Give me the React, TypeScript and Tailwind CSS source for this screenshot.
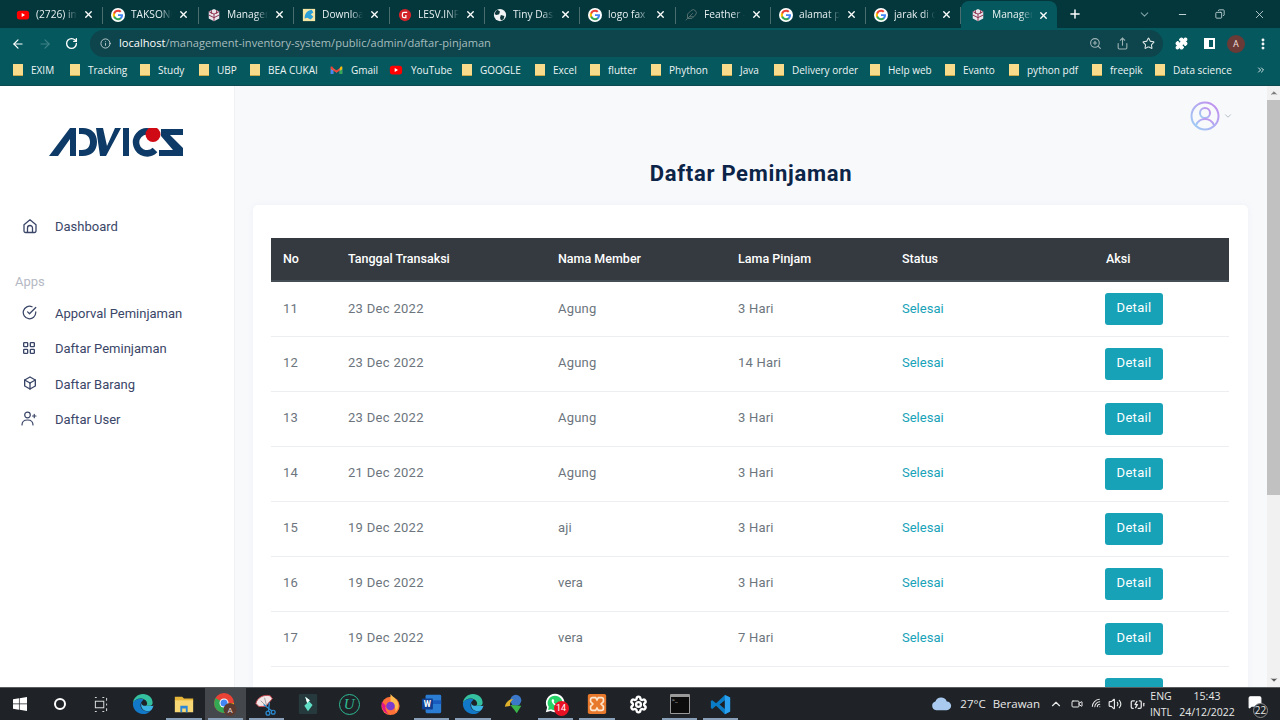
import React from 'react';
import { ArrowLeft, ArrowRight, RotateCw, Info, ZoomIn, Share, Star, Puzzle, X, Plus, ChevronDown, Minus, Copy, ChevronUp, Volume2, Wifi, BatteryCharging, MessageSquare, Settings, EllipsisVertical, Video, ChevronsRight } from 'lucide-react';
import { FiCheckCircle } from 'react-icons/fi';
import { TbLayoutGrid, TbBox } from 'react-icons/tb';

const GoogleIcon = () => (
  <svg viewBox="0 0 24 24" className="w-[14px] h-[14px] shrink-0">
    <circle cx="12" cy="12" r="12" fill="#fff" />
    <path d="M20.6 12.2c0-.6-.1-1.200-.2-1.700H12v3.300h4.800c-.2 1.100-.8 2-1.800 2.700v2.200h2.900c1.700-1.600 2.700-3.800 2.700-6.500z" fill="#4285F4" />
    <path d="M12 21c2.400 0 4.400-.8 5.900-2.200L15 16.500c-.8.500-1.800.9-3 .9-2.300 0-4.300-1.600-5-3.700H4v2.300C5.500 19 8.500 21 12 21z" fill="#34A853" />
    <path d="M7 13.700c-.4-1.100-.4-2.300 0-3.400V8H4c-1.300 2.500-1.300 5.500 0 8l3-2.300z" fill="#FBBC05" />
    <path d="M12 6.600c1.300 0 2.500.5 3.400 1.300L18 5.400C16.400 3.900 14.400 3 12 3 8.500 3 5.500 5 4 8l3 2.300c.7-2.100 2.700-3.700 5-3.700z" fill="#EA4335" />
  </svg>
);

const YoutubeIcon = () => (
  <svg viewBox="0 0 16 16" className="w-[14px] h-[14px] shrink-0">
    <rect x="1" y="3" width="14" height="10" rx="3" fill="#f00" />
    <path d="M6.500 5.800v4.400L10.300 8z" fill="#fff" />
  </svg>
);

const CubeIcon = () => (
  <svg viewBox="0 0 16 16" className="w-[14px] h-[14px] shrink-0">
    <path d="M8 1l6 3v8l-6 3-6-3V4z" fill="#e9e4ea" />
    <path d="M2 4l6 3 6-3M8 7v8M5 2.500v4M11 2.500v4M2 8l6 3 6-3" stroke="#8b2d4c" strokeWidth="1.100" fill="none" />
  </svg>
);

const DownloadIcon = () => (
  <svg viewBox="0 0 16 16" className="w-[14px] h-[14px] shrink-0">
    <rect x="1" y="1" width="14" height="14" fill="#f6e6a6" />
    <path d="M3 12C3 6 6 3 11 2l2 3-3 2 3 3-3 3-4-2z" fill="#2b9fd8" />
  </svg>
);

const LesvIcon = () => (
  <svg viewBox="0 0 16 16" className="w-[14px] h-[14px] shrink-0">
    <circle cx="8" cy="8" r="7" fill="#d3232a" />
    <path d="M10.500 5H7a2 2 0 00-2 2v2a2 2 0 002 2h2V8" stroke="#fff" strokeWidth="1.400" fill="none" />
  </svg>
);

const GlobeIcon = () => (
  <svg viewBox="0 0 16 16" className="w-[14px] h-[14px] shrink-0">
    <circle cx="8" cy="8" r="7" fill="#f1f3f4" />
    <path d="M5 2l3 2-1 3-3 1-2-1c.3-2 1.500-4 3-5zM9 8l4 1-1 4-3 1-1-3z" fill="#10383c" />
  </svg>
);

const FeatherIcon = () => (
  <svg viewBox="0 0 16 16" className="w-[14px] h-[14px] shrink-0" fill="none" stroke="#54706f" strokeWidth="1.100">
    <path d="M13 3a3.500 3.500 0 00-5 0L4 7v5h5l4-4a3.500 3.500 0 000-5zM2 14L10 6M6 10h5" />
  </svg>
);

const FolderIcon = () => (
  <svg viewBox="0 0 10 14" className="w-[10px] h-[14px] shrink-0">
    <path d="M0 1h10v12H2.500L0 13z" fill="#f8dc8b" />
    <path d="M0 13h10v-1H0z" fill="#c9a94b" />
  </svg>
);

const GmailIcon = () => (
  <svg viewBox="0 0 16 12" className="w-[13px] h-[10px] shrink-0">
    <path d="M1 11V2l7 5 7-5v9h-3V6L8 9 4 6v5z" fill="#c9c9c9" />
    <path d="M1 2v3l3 2V3.500L2.500 1.500z" fill="#ea4335" />
    <path d="M15 2v3l-3 2V3.500l1.500-2z" fill="#fbbc05" />
    <path d="M4 3.500L8 6.500l4-3v3L8 9.500l-4-3z" fill="#ea4335" />
    <path d="M1 5v6h3V7z" fill="#4285f4" />
    <path d="M15 5v6h-3V7z" fill="#34a853" />
  </svg>
);

const HomeIcon = () => (
  <svg viewBox="0 0 16 16" className="w-[16px] h-[16px] -mt-[2px]" fill="none" stroke="currentColor" strokeWidth="1.300" strokeLinejoin="round">
    <path d="M2 6.800L8 1.800l6 5V13a1.500 1.500 0 01-1.500 1.500h-9A1.500 1.500 0 012 13z" />
    <path d="M5.500 14.500V10a2.500 2.500 0 015 0v4.500" />
  </svg>
);

const UserAddIcon = () => (
  <svg viewBox="0 0 16 16" className="w-[16px] h-[16px] -ml-[1px]" fill="none" stroke="currentColor" strokeWidth="1.200" strokeLinecap="round">
    <circle cx="6.500" cy="4" r="2.800" />
    <path d="M1 14c0-3.300 2.400-5 5.500-5s5.500 1.700 5.500 5M11.500 5h3.500M13.250 3.250v3.500" />
  </svg>
);

const tabs = [
  { title: '(2726) im', icon: <YoutubeIcon />, cls: 'w-[95px]' },
  { title: 'TAKSONOMI', icon: <GoogleIcon />, cls: 'w-[96px]' },
  { title: 'Managemen', icon: <CubeIcon />, cls: 'w-[95px]' },
  { title: 'Downloads', icon: <DownloadIcon />, cls: 'w-[96px]' },
  { title: 'LESV.INFO', icon: <LesvIcon />, cls: 'w-[95px]' },
  { title: 'Tiny Dashb', icon: <GlobeIcon />, cls: 'w-[95px]' },
  { title: 'logo fax -', icon: <GoogleIcon />, cls: 'w-[96px]' },
  { title: 'Feather -', icon: <FeatherIcon />, cls: 'w-[95px]' },
  { title: 'alamat pt', icon: <GoogleIcon />, cls: 'w-[95px]' },
  { title: 'jarak di c', icon: <GoogleIcon />, cls: 'w-[95px]' },
];

const bookmarks = [
  { label: 'EXIM', cls: 'w-[57px]' },
  { label: 'Tracking', cls: 'w-[70px]' },
  { label: 'Study', cls: 'w-[59px]' },
  { label: 'UBP', cls: 'w-[51px]' },
  { label: 'BEA CUKAI', cls: 'w-[80px]' },
  { label: 'Gmail', cls: 'w-[59px] gap-[7px]', icon: <GmailIcon /> },
  { label: 'YouTube', cls: 'w-[73px] gap-[6px]', icon: <YoutubeIcon /> },
  { label: 'GOOGLE', cls: 'w-[73px]' },
  { label: 'Excel', cls: 'w-[55px]' },
  { label: 'flutter', cls: 'w-[61px]' },
  { label: 'Phython', cls: 'w-[71px]' },
  { label: 'Java', cls: 'w-[52px]' },
  { label: 'Delivery order', cls: 'w-[96px]' },
  { label: 'Help web', cls: 'w-[75px]' },
  { label: 'Evanto', cls: 'w-[64px]' },
  { label: 'python pdf', cls: 'w-[83px]' },
  { label: 'freepik', cls: 'w-[63px]' },
  { label: 'Data science', cls: 'w-[90px]' },
];

const menuApps = [
  { label: 'Apporval Peminjaman', icon: <FiCheckCircle className="w-[15px] h-[15px]" />, cls: 'h-[35px]' },
  { label: 'Daftar Peminjaman', icon: <TbLayoutGrid className="w-[16px] h-[16px] -ml-[1px]" />, cls: 'h-[36px]' },
  { label: 'Daftar Barang', icon: <TbBox className="w-[16px] h-[16px]" />, cls: 'h-[35px]' },
  { label: 'Daftar User', icon: <UserAddIcon />, cls: 'h-[36px]' },
];

const rows = [
  { no: 11, date: '23 Dec 2022', member: 'Agung', lama: '3 Hari' },
  { no: 12, date: '23 Dec 2022', member: 'Agung', lama: '14 Hari' },
  { no: 13, date: '23 Dec 2022', member: 'Agung', lama: '3 Hari' },
  { no: 14, date: '21 Dec 2022', member: 'Agung', lama: '3 Hari' },
  { no: 15, date: '19 Dec 2022', member: 'aji', lama: '3 Hari' },
  { no: 16, date: '19 Dec 2022', member: 'vera', lama: '3 Hari' },
  { no: 17, date: '19 Dec 2022', member: 'vera', lama: '7 Hari' },
  { no: 18, date: '19 Dec 2022', member: 'vera', lama: '3 Hari' },
];

const EdgeIcon = () => (
  <svg viewBox="0 0 24 24" className="w-[22px] h-[22px]">
    <path d="M12 1C6 1 1.500 5.500 1 11c2-4 6-5.500 9.500-5 3.500.5 6 3 6 5.500 0 1.500-1 2.500-2.500 2.500h5c2.500 0 3.500-1.500 3.500-3.500C22.500 5 18 1 12 1z" fill="#35c1a0" />
    <path d="M1 11c-.5 6.500 4.500 12 11 12 3.500 0 6.500-1.500 8.500-4-3 1.500-6.500 1-8.500-.5-3-2-3.500-6-1.500-9 1-1.500 2-2 2.500-2.500C9 5.500 3 6.500 1 11z" fill="#1279c9" />
    <path d="M14 14c-1.500 0-3.500-.5-3.500-3-1 2.500-.5 5 1.500 7 2.500 2 6 2 8.500 1 1.500-1.500 2.500-3.500 3-5.500-1.500 1-3 .5-9.500.5z" fill="#3cb4e6" />
  </svg>
);

const taskbarIcons = [
  { key: 'edge', bar: false, icon: <EdgeIcon /> },
  {
    key: 'files', bar: true, icon: (
      <svg viewBox="0 0 24 24" className="w-[22px] h-[22px]">
        <path d="M2 4h8l2 2h10v3H2z" fill="#e8b63a" />
        <path d="M2 8h20v13H2z" fill="#f8d775" />
        <path d="M8 14h8v7h-2v-4h-4v4H8z" fill="#2b88d8" />
      </svg>
    ),
  },
  {
    key: 'chrome', bar: true, active: true, icon: (
      <svg viewBox="0 0 24 24" className="w-[24px] h-[24px]">
        <circle cx="11" cy="11" r="10" fill="#ea4335" />
        <path d="M11 11L2.500 6A10 10 0 0011 21l4.500-8z" fill="#34a853" />
        <path d="M11 11h9.800A10 10 0 0111 21z" fill="#fbbc05" />
        <circle cx="11" cy="11" r="4.500" fill="#fff" />
        <circle cx="11" cy="11" r="3.500" fill="#4285f4" />
        <circle cx="17" cy="17.500" r="6.500" fill="#5b3a32" />
        <text x="17" y="20.500" textAnchor="middle" fontSize="8" fill="#e8d8d4" fontFamily="Roboto, sans-serif">A</text>
      </svg>
    ),
  },
  {
    key: 'snip', bar: true, icon: (
      <svg viewBox="0 0 24 24" className="w-[23px] h-[23px]">
        <path d="M1 11C2 5 9 1 16 3l2 3-7 8-7 0z" fill="#f3e6e6" stroke="#c9494f" strokeWidth="1" />
        <path d="M6 8l5 5M10 5l2 8" stroke="#8a8a8a" strokeWidth=".8" />
        <path d="M9 12l9 7M15 10l-1 10" stroke="#2a8bd2" strokeWidth="1.300" fill="none" />
        <circle cx="19" cy="20" r="2" fill="none" stroke="#2a8bd2" strokeWidth="1.300" />
        <circle cx="13.500" cy="21" r="2" fill="none" stroke="#2a8bd2" strokeWidth="1.300" />
      </svg>
    ),
  },
  {
    key: 'filmora', bar: false, icon: (
      <svg viewBox="0 0 24 24" className="w-[22px] h-[22px]">
        <rect x="2" y="1" width="20" height="22" rx="1.500" fill="#26393d" />
        <path d="M9 4l5 4-3 3zM13 9l4 4-5 7-4-6z" fill="#5fe0c6" />
        <path d="M9 4l5 4-3 3z" fill="#ffffff" />
      </svg>
    ),
  },
  {
    key: 'upwork', bar: false, icon: (
      <div className="w-[21px] h-[21px] rounded-full border-[1.500px] border-[#2dbb94] flex items-center justify-center text-[#2dbb94] text-[15px] italic font-['Liberation_Serif',serif]">U</div>
    ),
  },
  {
    key: 'firefox', bar: false, icon: (
      <svg viewBox="0 0 24 24" className="w-[23px] h-[23px]">
        <circle cx="12" cy="13.500" r="9.500" fill="#ff7139" />
        <path d="M12 1c2 3 7 5 8 10 1 4-1 7-3 9 1-4-1-8-5-9z" fill="#ffbd4f" />
        <circle cx="12" cy="13.500" r="4.500" fill="#7a3bd0" />
        <path d="M3 9c-1 5 1 11 7 13-3-3-4-6-3-9z" fill="#e31587" />
      </svg>
    ),
  },
  {
    key: 'word', bar: true, icon: (
      <svg viewBox="0 0 24 24" className="w-[22px] h-[22px]">
        <rect x="5" y="2" width="17" height="20" rx="1.500" fill="#2b7cd3" />
        <path d="M5 8h17v4H5z" fill="#185abd" />
        <rect x="1" y="6" width="12" height="12" rx="1" fill="#103f91" />
        <text x="7" y="15.500" textAnchor="middle" fontSize="9" fontWeight="700" fill="#fff" fontFamily="Roboto, sans-serif">W</text>
      </svg>
    ),
  },
  { key: 'edge2', bar: true, icon: <EdgeIcon /> },
  {
    key: 'idm', bar: false, icon: (
      <svg viewBox="0 0 24 24" className="w-[22px] h-[22px]">
        <circle cx="14" cy="8" r="6" fill="#3b78c9" />
        <path d="M2 15c1-6 6-9 9-8-3 2-4 5-3 7z" fill="#e0b12a" />
        <path d="M8 13l12 1-5 8-3-4z" fill="#3bb44a" />
      </svg>
    ),
  },
  {
    key: 'wa', bar: true, icon: (
      <div className="relative w-[24px] h-[24px]">
        <svg viewBox="0 0 24 24" className="w-[22px] h-[22px]">
          <path d="M12 2a10 10 0 00-8.600 15L2 22l5.200-1.400A10 10 0 1012 2z" fill="#fff" />
          <path d="M12 4a8 8 0 00-6.800 12.200L4.500 19.500l3.300-.8A8 8 0 1012 4z" fill="#25d366" />
          <path d="M9 8c-1 1-1 3 1 5s4 3 5.500 2l.5-1.500-2-1-1 .8c-1-.4-2-1.500-2.500-2.500l.8-1-1-2z" fill="#fff" />
        </svg>
        <span className="absolute -right-[1px] bottom-0 w-[15px] h-[15px] rounded-full bg-[#e81123] text-white text-[9px] leading-[15px] text-center font-['Roboto',sans-serif]">14</span>
      </div>
    ),
  },
  {
    key: 'xampp', bar: true, icon: (
      <svg viewBox="0 0 24 24" className="w-[22px] h-[22px]">
        <rect x="2" y="1" width="20" height="22" rx="2" fill="#e8792c" />
        <path d="M7 5h3.500L12 7.500 13.500 5H17a2 2 0 012 2v2.500L16.500 12l2.500 2.500V17a2 2 0 01-2 2h-3.500L12 16.500 10.500 19H7a2 2 0 01-2-2v-2.500L7.500 12 5 9.500V7a2 2 0 012-2z" fill="none" stroke="#fde6cf" strokeWidth="1.800" />
      </svg>
    ),
  },
  { key: 'settings', bar: false, icon: <Settings className="w-[19px] h-[19px] text-white" strokeWidth={3} /> },
  {
    key: 'cmd', bar: true, icon: (
      <div className="w-[20px] h-[20px] bg-[#0c0c0c] border border-[#9a9a9a] border-t-[3px] rounded-[1px] text-[#ddd] text-[6px] leading-[7px] pl-[1px]">
        &gt;_
      </div>
    ),
  },
  {
    key: 'vscode', bar: true, icon: (
      <svg viewBox="0 0 24 24" className="w-[21px] h-[21px]">
        <path d="M17 1l6 3v16l-6 3L7 13.500 2.500 17 1 16v-8l1.500-1L7 10.500z" fill="#0a7cc5" />
        <path d="M17 7l-6 5 6 5z" fill="#1e1f22" />
        <path d="M17 1l6 3v16l-6 3z" fill="#2aa0ee" />
      </svg>
    ),
  },
];

export default function App() {
  return (
    <div className="h-screen w-full overflow-hidden flex flex-col bg-white font-['Roboto',sans-serif]">
      {/* Chrome: tab strip */}
      <div className="h-[28px] bg-[#03373c] flex items-stretch pl-[8px] shrink-0 font-['Open_Sans',sans-serif] text-[10.2px] text-[#e8f1f1]">
        {tabs.map((tab, i) => (
          <div key={i} className={`${tab.cls} relative flex items-center pl-[8px] pt-[1px] shrink-0`}>
            {tab.icon}
            <span className="ml-[6px] w-[41px] overflow-hidden whitespace-nowrap [mask-image:linear-gradient(to_right,black_70%,transparent)]">
              {tab.title}
            </span>
            <X className="w-[11px] h-[11px] ml-[6px] text-white" strokeWidth={3} />
            <span className="absolute right-0 top-[7px] h-[17px] w-px bg-[#4a6d70]" />
          </div>
        ))}
        <div className="w-[96px] flex items-center pl-[10px] pt-[1px] shrink-0 bg-[#05585e] rounded-t-[8px] mt-[1px]">
          <CubeIcon />
          <span className="ml-[7px] w-[41px] overflow-hidden whitespace-nowrap [mask-image:linear-gradient(to_right,black_70%,transparent)]">
            Management
          </span>
          <X className="w-[11px] h-[11px] ml-[5px] text-white" strokeWidth={3} />
        </div>
        <div className="w-[36px] flex items-center justify-center">
          <Plus className="w-[14px] h-[14px] text-white" strokeWidth={2.500} />
        </div>
        <div className="flex-1 flex items-center justify-end text-[#cfe0e0]">
          <ChevronDown className="w-[13px] h-[13px] mr-[26px] text-[#7fa1a3]" />
          <Minus className="w-[11px] h-[11px] mr-[27px]" />
          <Copy className="w-[10px] h-[10px] mr-[28px] -scale-x-100" />
          <X className="w-[13px] h-[13px] mr-[14px]" strokeWidth={1.500} />
        </div>
      </div>

      {/* Chrome: toolbar */}
      <div className="h-[29px] pt-[2px] bg-[#05585e] flex items-center shrink-0">
        <ArrowLeft className="w-[14px] h-[14px] ml-[11px] text-white" />
        <ArrowRight className="w-[14px] h-[14px] ml-[13px] text-[#3e8287]" />
        <RotateCw className="w-[13px] h-[13px] ml-[13px] text-white" strokeWidth={2.500} />
        <div className="ml-[12px] w-[1073px] h-[27px] rounded-full bg-[#0e444b] flex items-center pl-[10px] pr-[8px] font-['Open_Sans',sans-serif] text-[11.1px]">
          <Info className="w-[11px] h-[11px] text-[#c3d4d5]" />
          <span className="ml-[8px] text-white">localhost</span>
          <span className="text-[#a6bdbf]">/management-inventory-system/public/admin/daftar-pinjaman</span>
          <div className="ml-auto flex items-center gap-[13.500px] text-[#9db4b6]">
            <ZoomIn className="w-[13px] h-[13px]" />
            <Share className="w-[13px] h-[13px]" />
            <Star className="w-[13px] h-[13px] text-[#dce6e6]" />
          </div>
        </div>
        <Puzzle className="ml-[12px] w-[13px] h-[13px] text-white fill-white" />
        <div className="ml-[16px] w-[11px] h-[11px] border-2 border-white border-l-[5px]" />
        <div className="ml-[12px] w-[18px] h-[18px] rounded-full bg-[#6a3a36] text-[#f0dedc] text-[9px] leading-[18px] text-center">A</div>
        <EllipsisVertical className="ml-[11px] w-[14px] h-[14px] text-white" strokeWidth={3} />
      </div>

      {/* Chrome: bookmarks */}
      <div className="h-[29px] pb-[2px] bg-[#05585e] flex items-center pl-[13px] shrink-0 border-b border-[#0d4a50] font-['Open_Sans',sans-serif] text-[10px] text-[#eef5f5]">
        {bookmarks.map((b) => (
          <div key={b.label} className={`flex items-center gap-[8px] shrink-0 whitespace-nowrap ${b.cls}`}>
            {b.icon ?? <FolderIcon />}
            <span>{b.label}</span>
          </div>
        ))}
        <ChevronsRight className="ml-[11px] w-[10px] h-[10px] text-white" />
      </div>

      {/* Page */}
      <div className="flex-1 min-h-0 flex">
        <aside className="w-[235px] shrink-0 bg-white border-r border-[#f0f1f4]">
          <div className="pl-[49px] pt-[42px]">
            <svg viewBox="0 0 134 30" className="w-[134px] h-[30px]">
              <g fill="#0d3a66">
                <path d="M0 28L21 0h6v28h-6V11L9 28z" />
                <path d="M30 0h4c8 0 14 5 14 14s-6 14-14 14h-4v-6h3c5 0 8-3 8-8s-3-8-8-8h-3z" />
                <path d="M47 0h7l4 18L66 0h6L57 28h-6z" />
                <rect x="74" y="0" width="6" height="28" />
                <path d="M112 1H134V7H121L134 20V28H110V22H124L112 8Z" />
              </g>
              <path d="M106 22A11 11 0 1 1 100 3.500" fill="none" stroke="#0d3a66" strokeWidth="6.500" />
              <circle cx="104" cy="6.500" r="7.500" fill="#cf0a14" />
            </svg>
          </div>
          <nav className="mt-[51px] text-[13px] text-[#3a4668]">
            <div className="h-[35px] flex items-center pl-[22px] gap-[17px]">
              <HomeIcon />
              <span>Dashboard</span>
            </div>
            <div className="mt-[30px] pl-[15px] h-[16px] leading-[16px] text-[#b5b9c4]">Apps</div>
            <div className="mt-[6px]">
              {menuApps.map((m) => (
                <div key={m.label} className={`${m.cls} flex items-center pl-[22px]`}>
                  <span className="w-[33px] shrink-0 -mt-[3px]">{m.icon}</span>
                  <span>{m.label}</span>
                </div>
              ))}
            </div>
          </nav>
        </aside>

        <main className="flex-1 min-w-0 bg-[#f8f9fb] overflow-hidden">
          <div className="h-[60px] flex items-start justify-end pt-[15px] pr-[34px]">
            <svg viewBox="0 0 30 30" className="w-[30px] h-[30px]" fill="none" strokeWidth="2">
              <defs>
                <linearGradient id="avatarGrad" x1="0" y1="1" x2="1" y2="0">
                  <stop offset="0" stopColor="#9cd0f5" />
                  <stop offset="1" stopColor="#c58aee" />
                </linearGradient>
              </defs>
              <circle cx="15" cy="15" r="13.500" stroke="url(#avatarGrad)" />
              <circle cx="15" cy="12" r="5" stroke="url(#avatarGrad)" />
              <path d="M6 24c2-4 5-6 9-6s7 2 9 6" stroke="url(#avatarGrad)" />
            </svg>
            <ChevronDown className="w-[10px] h-[10px] mt-[10px] ml-[3px] text-[#aab0bc]" />
          </div>
          <h1 className="pt-[1px] text-center text-[22px] leading-[54px] font-bold tracking-[0.7px] text-[#0b2447]">
            Daftar Peminjaman
          </h1>
          <div className="ml-[18px] mr-[19px] mt-[4px] bg-white rounded-t-[5px] shadow-[0_0_6px_rgba(180,190,205,0.15)] pt-[33px] pl-[18px] pr-[19px]">
            <table className="w-full table-fixed text-left text-[13px] tracking-[0.2px]">
              <colgroup>
                <col className="w-[65px]" />
                <col className="w-[210px]" />
                <col className="w-[180px]" />
                <col className="w-[164px]" />
                <col className="w-[204px]" />
                <col />
              </colgroup>
              <thead>
                <tr className="h-[43px] bg-[#343a40] text-white border-b-2 border-[#454d55] text-[12.5px] tracking-normal">
                  <th className="pl-[12px] font-medium">No</th>
                  <th className="pl-[12px] font-medium">Tanggal Transaksi</th>
                  <th className="pl-[12px] font-medium">Nama Member</th>
                  <th className="pl-[12px] font-medium">Lama Pinjam</th>
                  <th className="pl-[12px] font-medium">Status</th>
                  <th className="pl-[12px] font-medium">Aksi</th>
                </tr>
              </thead>
              <tbody className="text-[#6c757d]">
                {rows.map((r) => (
                  <tr key={r.no} className="h-[55px] border-b border-[#eceef1]">
                    <td className="pl-[12px] pb-[1px]">{r.no}</td>
                    <td className="pl-[12px] pb-[1px] tracking-[0.3px]">{r.date}</td>
                    <td className="pl-[12px] pb-[1px]">{r.member}</td>
                    <td className="pl-[12px] pb-[1px]">{r.lama}</td>
                    <td className="pl-[12px] pb-[1px] text-[#17a2b8] tracking-normal">Selesai</td>
                    <td className="pl-[11px]">
                      <button className="w-[58px] h-[32px] rounded-[3px] bg-[#17a2b8] text-white text-[13px] pb-[2px] tracking-[0.3px]">
                        Detail
                      </button>
                    </td>
                  </tr>
                ))}
              </tbody>
            </table>
          </div>
        </main>

        {/* Browser scrollbar */}
        <div className="w-[13px] shrink-0 bg-[#f1f1f1] flex flex-col items-center">
          <ChevronUp className="w-[10px] h-[10px] mt-[2px] text-[#7a7a7a] fill-[#7a7a7a]" />
          <div className="w-full h-[395px] mt-[2px] bg-[#c1c1c1]" />
          <div className="flex-1" />
          <ChevronDown className="w-[10px] h-[10px] mb-[2px] text-[#555] fill-[#555]" />
        </div>
      </div>

      {/* Windows taskbar */}
      <div className="h-[33px] shrink-0 bg-[#1f2327] border-t border-[#5a5d60] flex items-stretch text-[#e8e8e8] font-['Open_Sans',sans-serif]">
        <div className="w-[40px] flex items-center justify-center">
          <svg viewBox="0 0 16 16" className="w-[14px] h-[14px]" fill="#fff">
            <path d="M0 2.500L6.800 1.500v6H0zM7.600 1.400L16 0v7.500H7.600zM0 8.300h6.800v6.200L0 13.500zM7.600 8.300H16V16l-8.400-1.300z" />
          </svg>
        </div>
        <div className="w-[40px] flex items-center justify-center">
          <div className="w-[12px] h-[12px] rounded-full border-2 border-white" />
        </div>
        <div className="w-[41px] flex items-center justify-center">
          <svg viewBox="0 0 16 16" className="w-[15px] h-[15px]" fill="none" stroke="#e8e8e8">
            <path d="M2 .500h2M2 15.500h2M12 .500h-2M12 15.500h-2M14.500 1v3M14.500 7v2M14.500 12v3" />
            <rect x="2.500" y="4.500" width="9" height="7" />
          </svg>
        </div>
        <div className="flex items-stretch ml-[1px]">
          {taskbarIcons.map((t) => (
            <div key={t.key} className={`relative w-[41.300px] flex items-center justify-center ${t.active ? 'bg-[#44484c]' : ''}`}>
              {t.icon}
              {t.bar && <span className="absolute bottom-0 left-[3px] right-[3px] h-[2px] bg-[#8aa0b8]" />}
            </div>
          ))}
        </div>
        <div className="flex-1" />
        <div className="flex items-center text-[11.5px]">
          <svg viewBox="0 0 24 16" className="w-[21px] h-[14px]">
            <path d="M6 15a5 5 0 01-1-9.800A7 7 0 0118 5a5 5 0 010 10z" fill="#a9c9ee" />
          </svg>
          <span className="ml-[8px]">27°C</span>
          <span className="ml-[7px]">Berawan</span>
          <ChevronUp className="ml-[9px] w-[14px] h-[14px]" />
          <Video className="ml-[8px] w-[12px] h-[12px]" />
          <Wifi className="ml-[8px] w-[12px] h-[12px] -rotate-45" />
          <Volume2 className="ml-[5px] w-[14px] h-[14px]" />
          <BatteryCharging className="ml-[8px] w-[15px] h-[15px]" />
          <div className="ml-[3px] w-[26px] text-center text-[10.5px] leading-[16px]">
            <div>ENG</div>
            <div>INTL</div>
          </div>
          <div className="ml-[2px] w-[62px] text-center text-[10.5px] leading-[16px]">
            <div>15:43</div>
            <div>24/12/2022</div>
          </div>
          <div className="relative ml-[10px] mr-[12px] w-[20px] h-full flex items-center">
            <MessageSquare className="w-[14px] h-[14px] text-white fill-white -mt-[4px]" />
            <span className="absolute right-0 bottom-[2px] w-[15px] h-[15px] rounded-full border border-[#8a8a8a] bg-[#1f2327] text-[10px] leading-[13px] text-center">22</span>
          </div>
        </div>
      </div>
    </div>
  );
}
